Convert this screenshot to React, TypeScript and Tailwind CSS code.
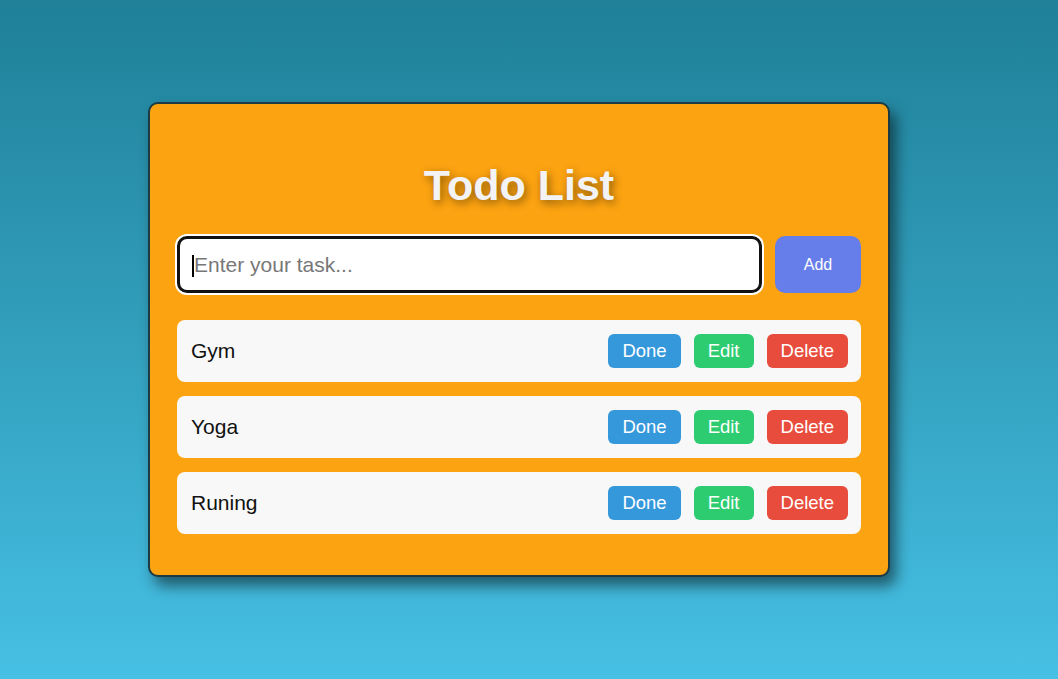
import React, { useState } from 'react';

interface Task {
  id: number;
  text: string;
}

const initialTasks: Task[] = [
  { id: 1, text: 'Gym' },
  { id: 2, text: 'Yoga' },
  { id: 3, text: 'Runing' },
];

const TaskRow: React.FC<{ task: Task }> = ({ task }) => {
  return (
    <li className="flex items-center justify-between h-[62px] pl-[14px] pr-[13px] bg-[#f8f8f8] rounded-[8px]">
      <span className="text-[21px] text-[#111]">{task.text}</span>
      <div className="flex items-center gap-[13px]">
        <button className="h-[34px] px-[14px] rounded-[6px] bg-[#3498db] text-white text-[18.5px]">Done</button>
        <button className="h-[34px] px-[14px] rounded-[6px] bg-[#2ecc71] text-white text-[18.5px]">Edit</button>
        <button className="h-[34px] px-[14px] rounded-[6px] bg-[#e74c3c] text-white text-[18.5px]">Delete</button>
      </div>
    </li>
  );
};

export default function App() {
  const [tasks] = useState<Task[]>(initialTasks);
  const [value, setValue] = useState('');

  return (
    <div
      className="w-full h-[679px] overflow-hidden bg-gradient-to-b from-[#1f8098] to-[#46c0e4] pt-[102px] pl-[148px]"
      style={{ fontFamily: '"Liberation Sans", Arial, sans-serif' }}
    >
      <div className="w-[742px] h-[475px] bg-[#fca311] border-2 border-[#1c3a44] rounded-[10px] pl-[27px] pr-[27px] pt-[27px] shadow-[6px_9px_14px_rgba(0,0,0,0.5)]">
        <h1 className="mt-[30px] mb-[27px] text-center text-[43px] leading-[48px] font-bold text-[#f3f3f6] [text-shadow:2px_3px_8px_rgba(0,0,0,0.45)]">
          Todo List
        </h1>

        {/* input row */}
        <div className="flex items-center gap-[13px] mb-[27px]">
          <div className="relative">
            <input
              value={value}
              onChange={(e) => setValue(e.target.value)}
              placeholder="Enter your task..."
              className="w-[585px] h-[57px] pl-[14px] bg-white border-[3px] border-[#111] rounded-[10px] text-[21px] placeholder:text-[#777] outline-none shadow-[0_0_0_2px_#ffffff]"
            />
            <span className="absolute left-[15px] top-[19px] w-[2px] h-[22px] bg-black" />
          </div>
          <button className="w-[86px] h-[57px] rounded-[10px] bg-[#667eea] text-white text-[16px]">Add</button>
        </div>

        <ul className="flex flex-col gap-[14px]">
          {tasks.map((t) => (
            <TaskRow key={t.id} task={t} />
          ))}
        </ul>
      </div>
    </div>
  );
}
